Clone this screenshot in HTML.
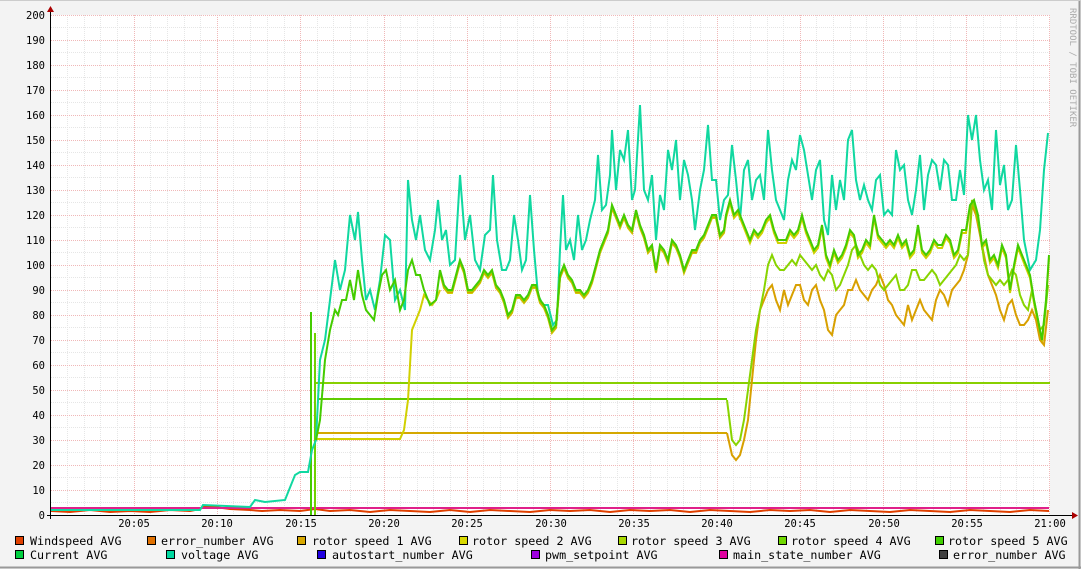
<!DOCTYPE html>
<html><head><meta charset="utf-8"><style>
html,body{margin:0;padding:0;background:#f3f3f3;}
svg{display:block;font-family:"DejaVu Sans Mono","Liberation Mono",monospace;}
</style></head><body>
<svg width="1081" height="569" viewBox="0 0 1081 569" xmlns="http://www.w3.org/2000/svg">
<rect x="0" y="0" width="1081" height="569" fill="#f3f3f3"/>
<line x1="0" y1="567.5" x2="1081" y2="567.5" stroke="#999" stroke-width="2"/>
<line x1="1079.5" y1="0" x2="1079.5" y2="569" stroke="#999" stroke-width="2"/>
<line x1="0" y1="0.5" x2="1081" y2="0.5" stroke="#ccc"/>
<rect x="51" y="15" width="999" height="500" fill="#fff"/>
<g stroke-dasharray="1,1" stroke-width="1">
<path stroke="#e6e6e6" d="M51 502.5H1050M51 477.5H1050M51 452.5H1050M51 427.5H1050M51 402.5H1050M51 377.5H1050M51 352.5H1050M51 327.5H1050M51 302.5H1050M51 277.5H1050M51 252.5H1050M51 227.5H1050M51 202.5H1050M51 177.5H1050M51 152.5H1050M51 127.5H1050M51 102.5H1050M51 77.5H1050M51 52.5H1050M51 27.5H1050
M67.5 15V515M84.5 15V515M100.5 15V515M117.5 15V515M150.5 15V515M167.5 15V515M184.5 15V515M200.5 15V515M233.5 15V515M250.5 15V515M267.5 15V515M284.5 15V515M317.5 15V515M333.5 15V515M350.5 15V515M367.5 15V515M400.5 15V515M417.5 15V515M433.5 15V515M450.5 15V515M483.5 15V515M500.5 15V515M517.5 15V515M533.5 15V515M567.5 15V515M583.5 15V515M600.5 15V515M617.5 15V515M650.5 15V515M667.5 15V515M683.5 15V515M700.5 15V515M733.5 15V515M750.5 15V515M767.5 15V515M783.5 15V515M816.5 15V515M833.5 15V515M850.5 15V515M866.5 15V515M900.5 15V515M916.5 15V515M933.5 15V515M950.5 15V515M983.5 15V515M1000.5 15V515M1016.5 15V515M1033.5 15V515"/>
<path stroke="#f0b8b8" d="M51 490.5H1050M51 465.5H1050M51 440.5H1050M51 415.5H1050M51 390.5H1050M51 365.5H1050M51 340.5H1050M51 315.5H1050M51 290.5H1050M51 265.5H1050M51 240.5H1050M51 215.5H1050M51 190.5H1050M51 165.5H1050M51 140.5H1050M51 115.5H1050M51 90.5H1050M51 65.5H1050M51 40.5H1050M51 15.5H1050
M134.5 15V515M217.5 15V515M300.5 15V515M384.5 15V515M467.5 15V515M550.5 15V515M633.5 15V515M717.5 15V515M800.5 15V515M883.5 15V515M966.5 15V515M1049.5 15V515"/>
</g>
<defs>
<polyline id="G" fill="none" stroke-width="2" points="440,270 444,285 448,290 452,290 456,275 460,260 464,270 468,290 472,290 476,285 480,280 484,270 488,275 492,270 496,285 500,290 504,300 508,315 512,310 516,295 520,295 524,300 528,295 532,285 536,285 540,300 544,305 548,315 552,330 556,325 560,275 564,265 568,275 572,280 576,290 580,290 584,295 588,290 592,280 596,265 600,250 604,240 608,230 612,205 616,215 620,225 624,215 628,225 632,230 636,210 640,225 644,235 648,250 652,245 656,270 660,245 664,250 668,260 672,240 676,245 680,255 684,270 688,260 692,250 696,250 700,240 704,235 708,225 712,215 716,215 720,235 724,230 726,215 730,200 734,215 738,210 742,220 746,230 750,240 754,230 758,235 762,230 766,220 770,215 774,230 778,240 782,240 786,240 790,230 794,235 798,230 802,215 806,230 810,240 814,250 818,245 822,225 826,255 830,265 834,250 838,260 842,255 846,245 850,230 854,235 858,255 862,250 866,240 870,245 874,215 878,235 882,240 886,245 890,240 894,245 898,235 902,245 906,240 910,255 914,250 918,225 922,250 926,255 930,250 934,240 938,245 942,245 946,235 950,240 954,255 958,250 962,230 966,230 970,205 974,200 978,215 982,245 986,240 990,260 994,255 998,265 1002,245 1006,255 1010,290 1014,265 1018,245 1022,255 1026,265 1030,275 1034,300 1038,320 1042,340 1046,300 1049,255"/>
<clipPath id="pre"><rect x="430" y="0" width="297" height="569"/></clipPath>
</defs>
<g fill="none" stroke-width="2">
<polyline stroke="#e04000" points="51,511 70,512 90,510 110,512 130,511 150,512 170,510 190,511 200,509 205,506 215,507 230,509 250,510 262,511 280,510 300,511 315,509 330,511 350,510 370,512 390,510 410,511 430,512 450,510 470,512 490,510 510,511 530,512 550,510 570,511 590,510 610,512 630,510 650,511 670,510 690,512 710,510 730,511 750,512 770,510 790,511 810,510 830,512 850,510 870,511 890,512 910,510 930,511 950,512 970,510 990,511 1010,512 1030,510 1049,511"/>
<polyline stroke="#e0208a" points="51,508 1049,508"/>
<line stroke="#88d000" x1="316" y1="383" x2="1050" y2="383"/>
<line stroke="#60cc00" x1="318" y1="399" x2="727" y2="399"/>
<line stroke="#d4a800" x1="318" y1="433" x2="727" y2="433"/>
<line stroke="#44cc00" x1="311" y1="515" x2="311" y2="312"/>
<line stroke="#70d000" x1="315" y1="515" x2="315" y2="333"/>
<polyline stroke="#10d8a0" points="51,510 200,510 203,505 250,507 255,500 265,502 285,500 295,475 300,472 308,472 312,450 316,440 320,360 325,340 330,300 335,260 340,290 345,270 350,215 355,240 358,212 362,260 366,300 370,290 375,310 380,280 385,235 390,240 395,300 400,290 405,310 408,180 412,220 416,240 420,215 425,250 430,260 435,230 438,200 442,240 446,230 450,265 455,260 460,175 465,240 470,215 475,260 480,270 485,235 490,230 493,175 497,240 502,270 506,270 510,260 514,215 518,240 522,270 526,260 530,195 534,250 538,295 543,305 548,305 553,325 557,320 560,250 563,195 566,250 570,240 574,260 578,215 582,250 586,240 590,220 595,200 598,155 602,210 606,205 610,175 612,130 616,190 620,150 624,160 628,130 632,200 635,190 640,105 644,190 648,200 652,175 656,240 660,195 664,210 668,150 672,170 676,140 680,200 684,160 688,175 692,200 695,230 700,190 704,170 708,125 712,180 716,180 720,220 724,200 728,195 732,145 736,180 740,220 744,170 748,160 752,200 756,180 760,175 764,200 768,130 772,170 776,200 780,210 784,220 788,180 792,160 796,170 800,135 804,150 808,175 812,200 816,170 820,160 824,220 828,235 832,175 836,210 840,180 844,200 848,140 852,130 856,180 860,200 864,185 868,200 872,210 876,180 880,175 884,215 888,210 892,215 896,150 900,170 904,165 908,200 912,215 916,190 920,155 924,210 928,175 932,160 936,165 940,190 944,160 948,165 952,200 956,200 960,170 964,195 968,115 972,140 976,115 980,160 984,190 988,180 992,210 996,130 1000,185 1004,165 1008,210 1012,200 1016,145 1020,190 1024,240 1030,270 1036,260 1040,230 1044,170 1048,133"/>
<polyline stroke="#d0d000" points="316,439 400,439 404,430 408,400 412,330 416,320 420,310 424,295 428,300 432,305 436,300 440,290"/>
<use href="#G" stroke="#d0d000" transform="translate(0,3)"/>
<use href="#G" stroke="#d4a000" transform="translate(0,2)" clip-path="url(#pre)"/>
<use href="#G" stroke="#a0d800" transform="translate(0,1)" clip-path="url(#pre)"/>
<polyline stroke="#d8a000" points="727,433 732,455 736,460 740,455 744,440 748,420 752,380 756,340 760,310 764,300 768,290 772,285 776,300 780,310 784,290 788,305 792,295 796,285 800,285 804,300 808,305 812,290 816,285 820,300 824,310 828,330 832,335 836,315 840,310 844,305 848,290 852,290 856,280 860,290 864,295 868,300 872,290 876,285 880,275 884,285 888,300 892,305 896,315 900,320 904,325 908,305 912,320 916,310 920,300 924,310 928,315 932,320 936,300 940,290 944,295 948,305 952,290 956,285 960,280 964,270 968,255 972,205 976,215 980,235 984,255 988,275 992,285 996,295 1000,310 1004,320 1008,305 1012,300 1016,315 1020,325 1024,325 1028,320 1032,310 1036,320 1040,340 1044,345 1048,310"/>
<polyline stroke="#88d400" points="727,400 732,440 736,445 740,440 744,420 748,390 752,360 756,330 760,310 764,290 768,265 772,255 776,265 780,270 784,270 788,265 792,260 796,265 800,255 804,260 808,265 812,270 816,265 820,275 824,280 828,270 832,275 836,290 840,285 844,275 848,265 852,250 856,245 860,255 864,265 868,270 872,265 876,270 880,285 884,290 888,285 892,280 896,275 900,290 904,290 908,285 912,270 916,270 920,280 924,280 928,275 932,270 936,275 940,285 944,280 948,275 952,270 956,265 960,255 964,260 968,255 972,200 976,210 980,230 984,260 988,275 992,280 996,285 1000,280 1004,285 1008,280 1012,270 1016,275 1020,295 1024,305 1028,310 1032,290 1036,310 1040,330 1044,325 1048,285"/>
<polyline stroke="#44cc00" points="316,440 320,420 325,360 330,330 335,310 338,315 342,300 346,300 350,280 354,300 358,270 362,295 366,310 370,315 374,320 378,295 382,275 386,270 390,290 395,280 400,310 404,300 408,270 412,260 416,275 420,275 424,290 430,305 436,300 440,270"/>
<use href="#G" stroke="#44cc00"/>
</g>
<g stroke="#000" stroke-width="1">
<line x1="50.5" y1="10" x2="50.5" y2="519"/>
<line x1="47" y1="515.5" x2="1075" y2="515.5"/>
</g>
<polygon points="47,12 54,12 50.5,6" fill="#a00"/>
<polygon points="1072,512 1072,519 1078,515.5" fill="#a00"/>
<g font-size="10.5" fill="#000" text-anchor="end">
<text x="45" y="519">0</text><text x="45" y="494">10</text><text x="45" y="469">20</text><text x="45" y="444">30</text><text x="45" y="419">40</text><text x="45" y="394">50</text><text x="45" y="369">60</text><text x="45" y="344">70</text><text x="45" y="319">80</text><text x="45" y="294">90</text><text x="45" y="269">100</text><text x="45" y="244">110</text><text x="45" y="219">120</text><text x="45" y="194">130</text><text x="45" y="169">140</text><text x="45" y="144">150</text><text x="45" y="119">160</text><text x="45" y="94">170</text><text x="45" y="69">180</text><text x="45" y="44">190</text><text x="45" y="19">200</text>
</g>
<g font-size="10.5" fill="#000" text-anchor="middle">
<text x="134" y="527">20:05</text><text x="217" y="527">20:10</text><text x="301" y="527">20:15</text><text x="384" y="527">20:20</text><text x="467" y="527">20:25</text><text x="551" y="527">20:30</text><text x="634" y="527">20:35</text><text x="717" y="527">20:40</text><text x="800" y="527">20:45</text><text x="884" y="527">20:50</text><text x="967" y="527">20:55</text><text x="1050" y="527">21:00</text>
</g>
<text transform="translate(1070,8) rotate(90)" font-size="9" fill="#aaa">RRDTOOL / TOBI OETIKER</text>
<g font-size="11.7" fill="#000" stroke="none">
<g stroke="#000" stroke-width="1">
<rect x="15.5" y="536.5" width="8" height="8" fill="#e04000"/>
<rect x="147.5" y="536.5" width="8" height="8" fill="#e07000"/>
<rect x="297.5" y="536.5" width="8" height="8" fill="#d8a800"/>
<rect x="459.5" y="536.5" width="8" height="8" fill="#d8d800"/>
<rect x="618.5" y="536.5" width="8" height="8" fill="#a8d800"/>
<rect x="778.5" y="536.5" width="8" height="8" fill="#70d800"/>
<rect x="935.5" y="536.5" width="8" height="8" fill="#40d000"/>
<rect x="15.5" y="550.5" width="8" height="8" fill="#00d040"/>
<rect x="166.5" y="550.5" width="8" height="8" fill="#00d8a0"/>
<rect x="317.5" y="550.5" width="8" height="8" fill="#2000e0"/>
<rect x="531.5" y="550.5" width="8" height="8" fill="#a000e0"/>
<rect x="719.5" y="550.5" width="8" height="8" fill="#e000a0"/>
<rect x="939.5" y="550.5" width="8" height="8" fill="#404040"/>
</g>
<text x="30" y="545">Windspeed AVG</text>
<text x="161" y="545">error_number AVG</text>
<text x="312" y="545">rotor speed 1 AVG</text>
<text x="472" y="545">rotor speed 2 AVG</text>
<text x="631" y="545">rotor speed 3 AVG</text>
<text x="791" y="545">rotor speed 4 AVG</text>
<text x="948" y="545">rotor speed 5 AVG</text>
<text x="30" y="559">Current AVG</text>
<text x="181" y="559">voltage AVG</text>
<text x="332" y="559">autostart_number AVG</text>
<text x="545" y="559">pwm_setpoint AVG</text>
<text x="733" y="559">main_state_number AVG</text>
<text x="953" y="559">error_number AVG</text>
</g>
</svg>
</body></html>
